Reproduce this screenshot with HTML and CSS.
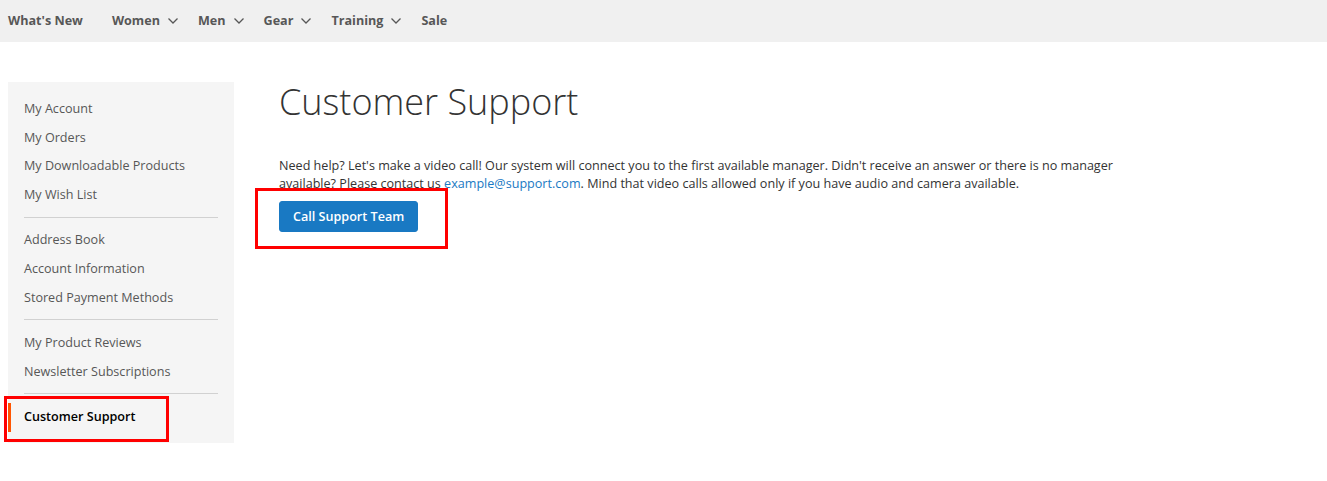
FILE: index.html
```html
<!DOCTYPE html>
<html lang="en">
<head>
<meta charset="utf-8">
<title>Customer Support</title>
<link rel="stylesheet" href="styles.css">
</head>
<body>
<nav class="topnav">
  <a class="nav-item" href="#">What's New</a>
  <a class="nav-item has-sub" href="#">Women <svg class="chev" viewBox="0 0 10 6" width="10" height="6"><path d="M0.5 0.5 L5 5 L9.5 0.5" fill="none" stroke="#575757" stroke-width="1.3"/></svg></a>
  <a class="nav-item has-sub" href="#">Men <svg class="chev" viewBox="0 0 10 6" width="10" height="6"><path d="M0.5 0.5 L5 5 L9.5 0.5" fill="none" stroke="#575757" stroke-width="1.3"/></svg></a>
  <a class="nav-item has-sub" href="#">Gear <svg class="chev" viewBox="0 0 10 6" width="10" height="6"><path d="M0.5 0.5 L5 5 L9.5 0.5" fill="none" stroke="#575757" stroke-width="1.3"/></svg></a>
  <a class="nav-item has-sub" href="#">Training <svg class="chev" viewBox="0 0 10 6" width="10" height="6"><path d="M0.5 0.5 L5 5 L9.5 0.5" fill="none" stroke="#575757" stroke-width="1.3"/></svg></a>
  <a class="nav-item" href="#">Sale</a>
</nav>
<div class="page">
  <aside class="sidebar">
    <ul class="acct-nav">
      <li><a href="#">My Account</a></li>
      <li><a href="#">My Orders</a></li>
      <li><a href="#">My Downloadable Products</a></li>
      <li><a href="#">My Wish List</a></li>
      <li class="delim"></li>
      <li><a href="#">Address Book</a></li>
      <li><a href="#">Account Information</a></li>
      <li><a href="#">Stored Payment Methods</a></li>
      <li class="delim"></li>
      <li><a href="#">My Product Reviews</a></li>
      <li><a href="#">Newsletter Subscriptions</a></li>
      <li class="delim"></li>
      <li class="current"><strong>Customer Support</strong><span class="hl hl-side"></span></li>
    </ul>
  </aside>
  <main class="main">
    <h1 class="title">Customer Support</h1>
    <p class="intro">Need help? Let's make a video call! Our system will connect you to the first available manager. Didn't receive an answer or there is no manager available? Please contact us <a href="#">example@support.com</a>. Mind that video calls allowed only if you have audio and camera available.</p>
    <div class="btn-wrap">
      <button class="btn" type="button">Call Support Team</button>
      <span class="hl hl-btn"></span>
    </div>
  </main>
</div>
</body>
</html>
```
FILE: styles.css
```css
* { box-sizing: border-box; }
html, body { margin: 0; padding: 0; }
body {
  font-family: "Open Sans", "Liberation Sans", sans-serif;
  color: #333;
  background: #fff;
  font-size: 12.6px;
}
a { text-decoration: none; }

.topnav {
  height: 42px;
  background: #f0f0f0;
  display: flex;
  align-items: center;
  padding: 0 0 2px 8px;
}
.nav-item {
  color: #575757;
  font-weight: 700;
  font-size: 12.6px;
  display: flex;
  align-items: center;
  gap: 8px;
  margin-right: 20px;
}
.nav-item:first-child { margin-right: 29px; }
.chev { display: block; margin-top: 1px; }

.page {
  display: flex;
  align-items: flex-start;
  padding: 40px 0 0 8px;
  gap: 45px;
}
.sidebar {
  width: 226px;
  flex: none;
  background: #f5f5f5;
  padding: 13px 0 11px;
}
.acct-nav { list-style: none; margin: 0; padding: 0; }
.acct-nav li a,
.acct-nav li strong {
  display: block;
  padding: 5px 10px 5px 16px;
  line-height: 18.7px;
  font-size: 12.6px;
  color: #575757;
}
.acct-nav li.delim {
  border-top: 1px solid #d1d1d1;
  margin: 7px 16px 8.5px;
}
.acct-nav li.current {
  position: relative;
  border-left: 3px solid #ff5501;
}
.acct-nav li.current strong {
  color: #000;
  font-weight: 600;
  padding-left: 13px;
}

.main {
  width: 850px;
}
.title {
  margin: -2px 0 0;
  font-weight: 300;
  font-size: 36px;
  line-height: 44px;
  color: #333;
}
.intro {
  margin: 33px 0 8px;
  line-height: 18px;
  font-size: 12.6px;
  color: #333;
}
.intro a { color: #1979c3; }

.btn-wrap { position: relative; display: inline-block; }
.btn {
  font-family: inherit;
  background: #1979c3;
  border: 1px solid #1979c3;
  color: #fff;
  font-weight: 600;
  font-size: 12.6px;
  border-radius: 3px;
  height: 31px;
  padding: 0 13px;
  cursor: pointer;
  display: block;
}

.hl {
  position: absolute;
  border: 3px solid #f00;
  pointer-events: none;
}
.hl-btn { left: -24px; top: -13px; width: 193px; height: 61px; }
.hl-side { left: -7px; top: -7px; width: 165px; height: 46px; }
```
